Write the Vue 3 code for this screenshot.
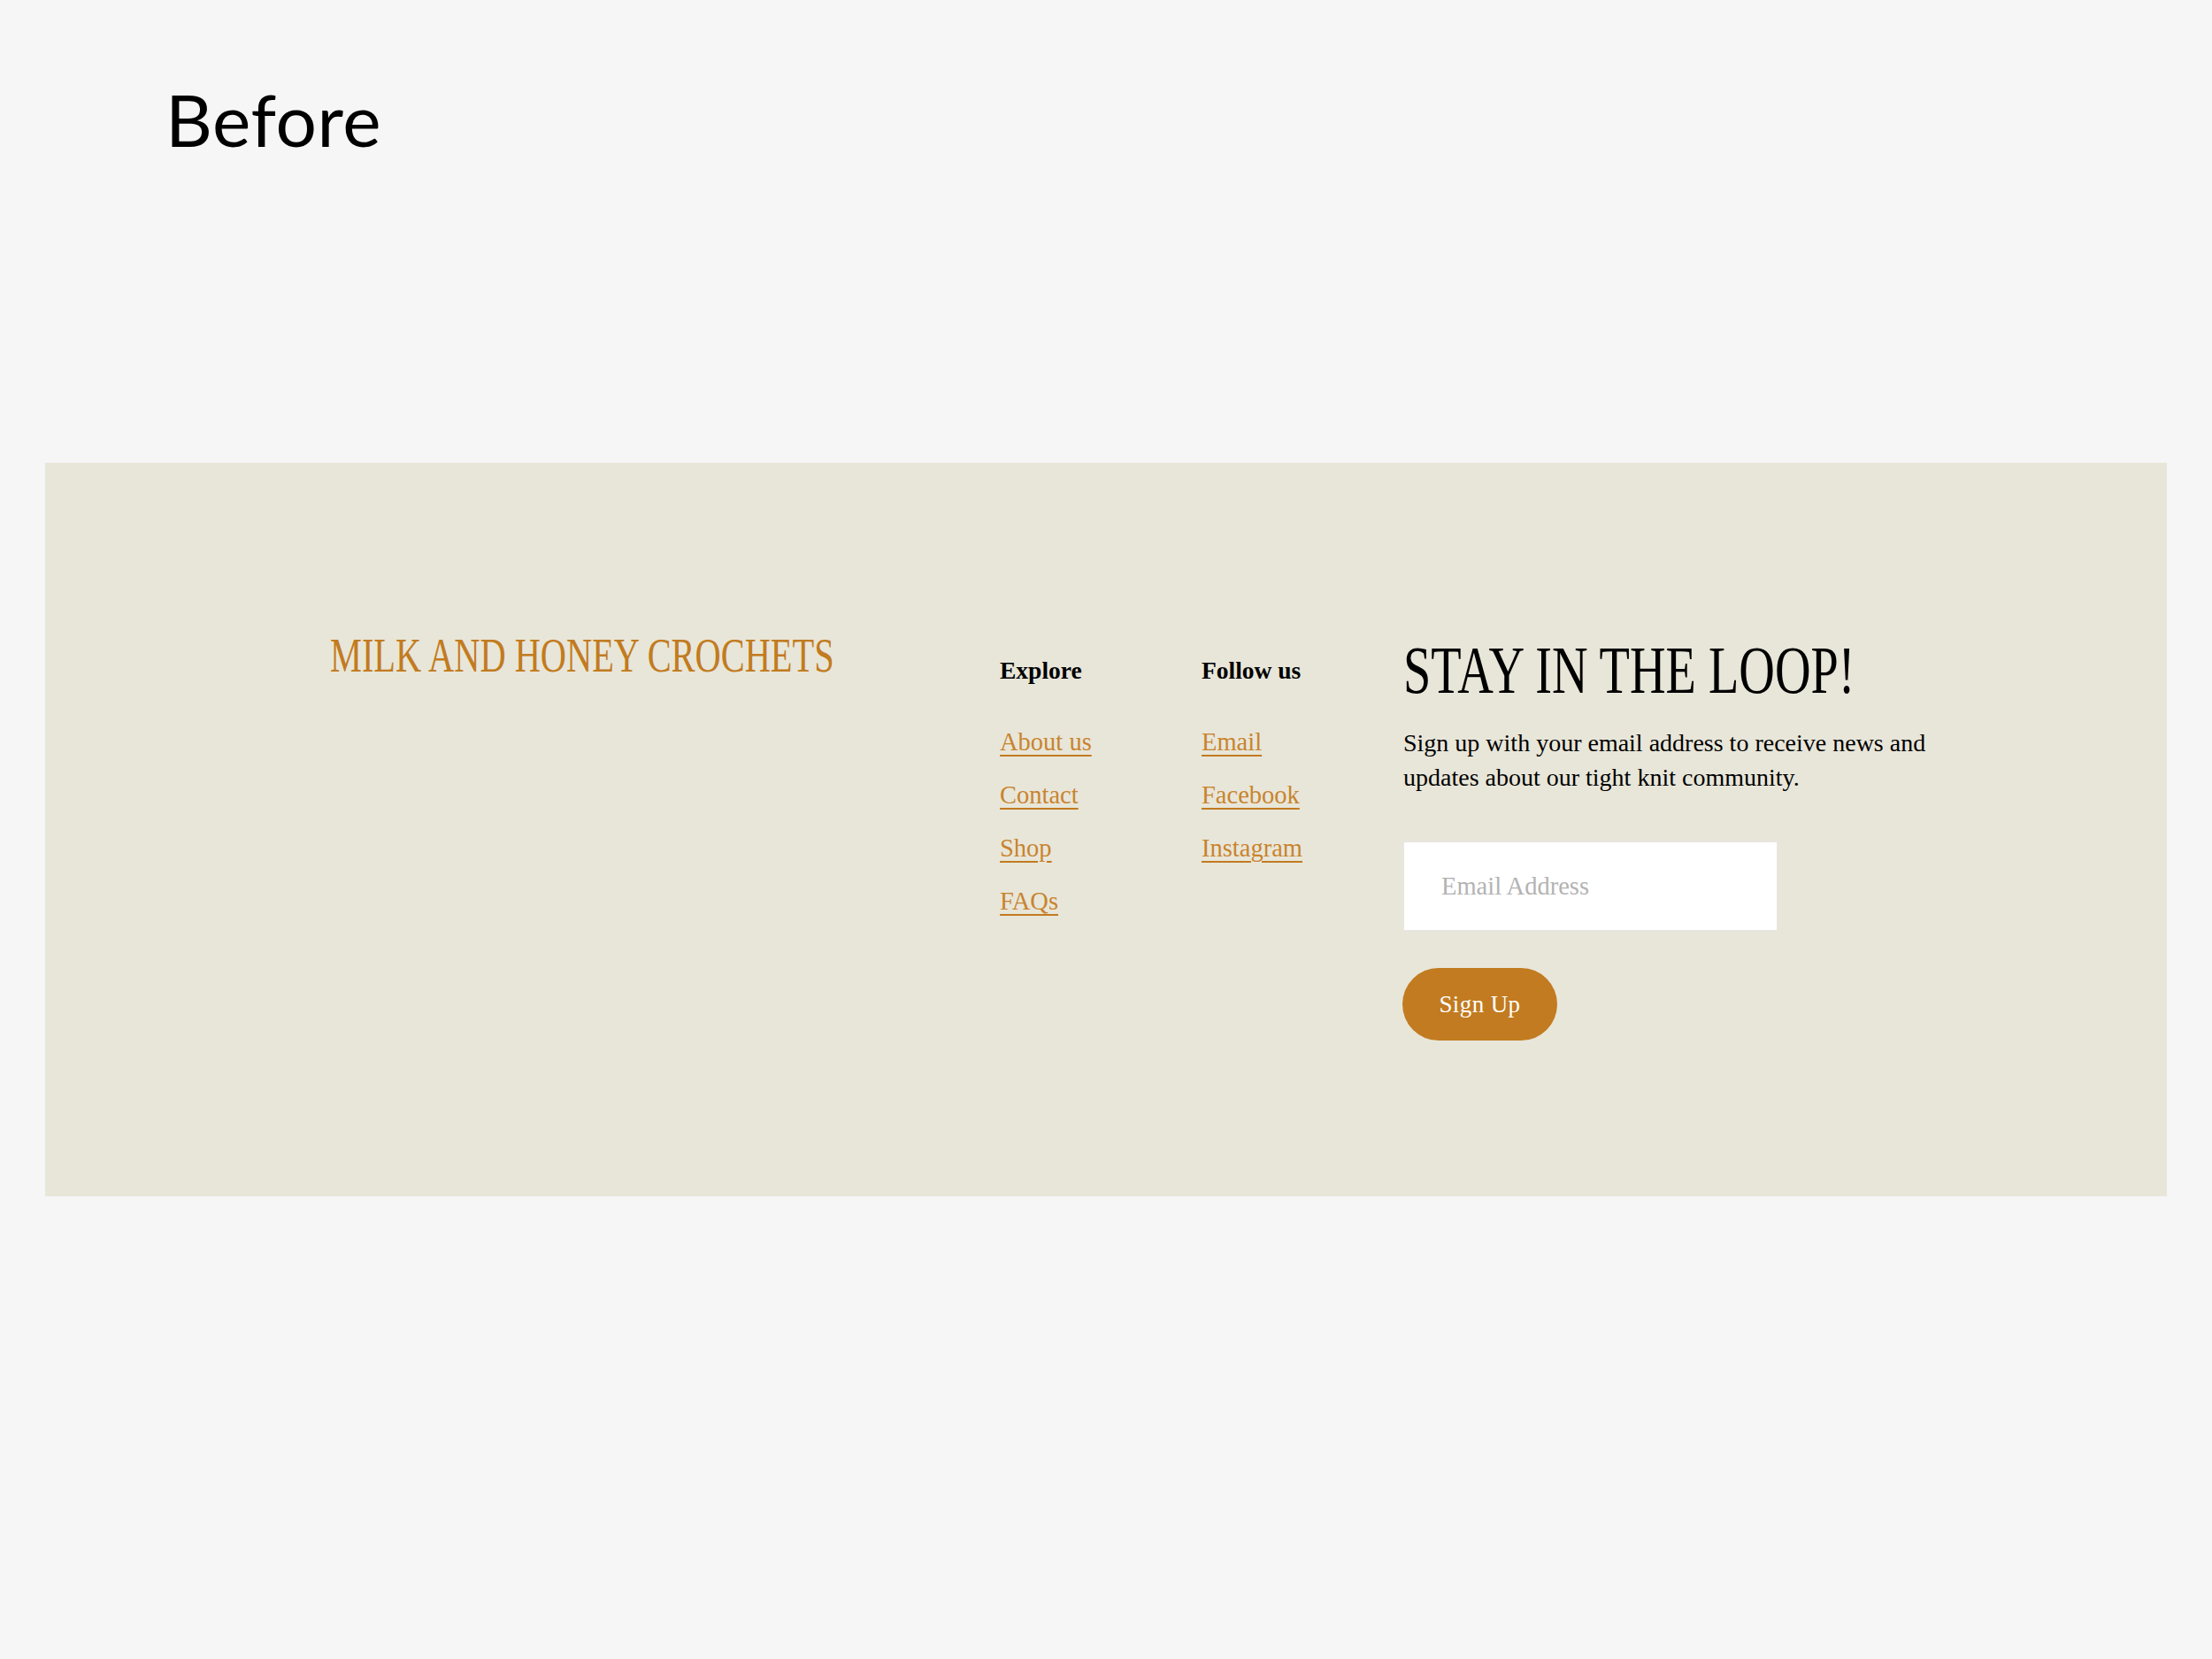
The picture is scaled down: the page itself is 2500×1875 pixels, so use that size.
<script setup>
const explore = ['About us', 'Contact', 'Shop', 'FAQs']
const follow = ['Email', 'Facebook', 'Instagram']
</script>

<template>
  <div class="page">
    <h1 class="title">Before</h1>
    <footer class="panel">
      <div class="brand"><span class="logo">MILK AND HONEY CROCHETS</span></div>
      <nav class="col">
        <h2>Explore</h2>
        <a v-for="l in explore" :key="l" href="#">{{ l }}</a>
      </nav>
      <nav class="col">
        <h2>Follow us</h2>
        <a v-for="l in follow" :key="l" href="#">{{ l }}</a>
      </nav>
      <section class="signup">
        <div class="head"><span>STAY IN THE LOOP!</span></div>
        <p>Sign up with your email address to receive news and updates about our tight knit community.</p>
        <input type="email" placeholder="Email Address" />
        <button type="button">Sign Up</button>
      </section>
    </footer>
  </div>
</template>

<style>
body { margin: 0; background: #f6f6f6; }
</style>

<style scoped>
.page {
  height: 1875px;
  box-sizing: border-box;
  padding: 0 51px;
  background: #f6f6f6;
  font-family: "Liberation Serif", serif;
}
.title {
  margin: 0;
  height: 523px;
  box-sizing: border-box;
  padding: 85px 0 0 136px;
  font: 400 82px/1.2 Lato, sans-serif;
  letter-spacing: 0.6px;
  color: #000;
}
.panel {
  height: 829px;
  box-sizing: border-box;
  padding: 190px 0 0 322px;
  background: #e8e6d9;
  display: grid;
  grid-template-columns: 757px 228px 228px 1fr;
  align-items: start;
}
.logo {
  display: inline-block;
  white-space: nowrap;
  font-size: 54px;
  line-height: 56px;
  color: #c27b20;
  transform: scaleX(0.748);
  transform-origin: left center;
}
.col { display: flex; flex-direction: column; align-items: flex-start; padding-top: 26px; }
.col h2 {
  margin: 0 0 32px;
  font-size: 27.5px;
  line-height: 38px;
  font-weight: 700;
  color: #000;
}
.col a {
  font-size: 28.5px;
  line-height: 60px;
  color: #c8842e;
  text-decoration: underline;
  text-decoration-color: #c27b20;
  text-decoration-thickness: 2px;
  text-underline-offset: 5px;
}
.head {
  height: 88px;
  font-size: 76px;
  line-height: 88px;
  color: #000;
  white-space: nowrap;
}
.head span {
  display: inline-block;
  transform: scaleX(0.74);
  transform-origin: left center;
}
.signup p {
  margin: 19px 0 0;
  width: 610px;
  font-size: 28px;
  line-height: 39px;
  color: #000;
}
.signup input {
  display: block;
  box-sizing: border-box;
  margin: 53px 0 0;
  width: 423px;
  height: 101px;
  padding: 0 42px;
  border: 1px solid #e6e6e6;
  border-radius: 0;
  background: #fff;
  font: 28.5px "Liberation Serif", serif;
  outline: none;
}
.signup input::placeholder { color: #b3b3b3; opacity: 1; }
.signup button {
  display: block;
  margin: 42px 0 0 -1px;
  width: 175px;
  height: 82px;
  border: 0;
  border-radius: 41px;
  background: #c27b20;
  color: #fff;
  font: 27px "Liberation Serif", serif;
  letter-spacing: 0.4px;
}
</style>
